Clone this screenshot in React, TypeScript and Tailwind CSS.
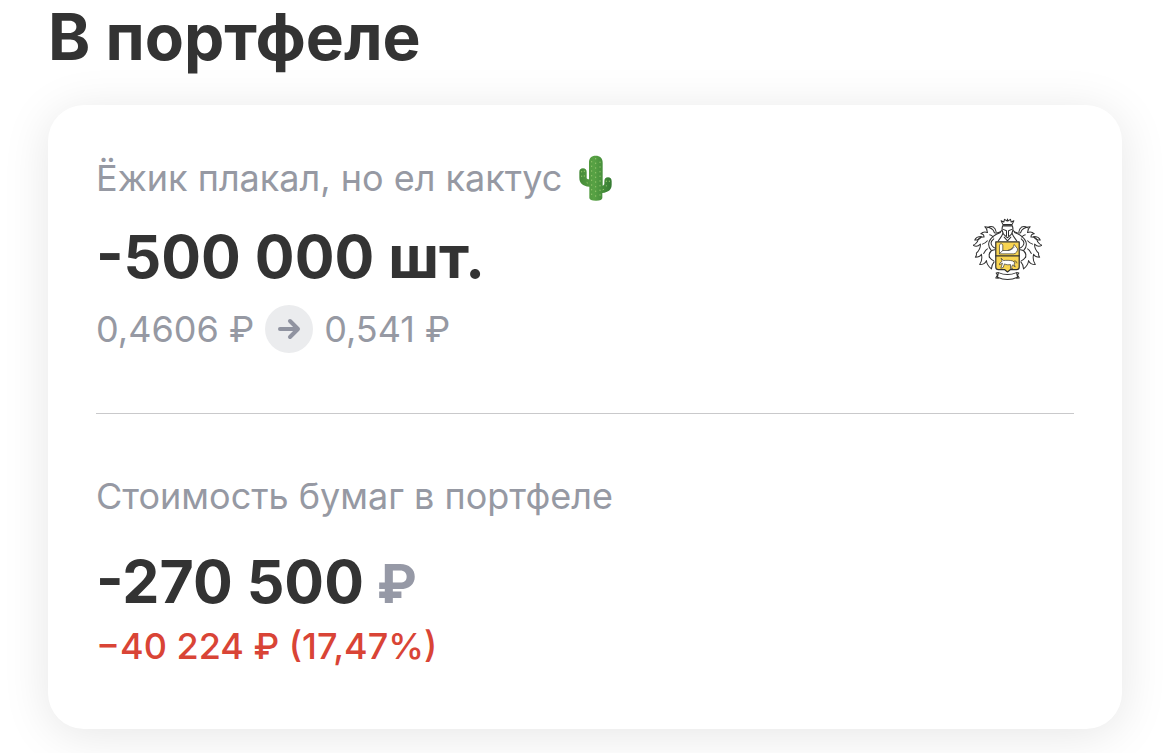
import { ReactNode } from "react";

interface Position {
  name: string;
  quantity: string;
  buyPrice: string;
  currentPrice: string;
  total: string;
  change: string;
}

const position: Position = {
  name: "Ёжик плакал, но ел кактус",
  quantity: "-500 000 шт.",
  buyPrice: "0,4606 ₽",
  currentPrice: "0,541 ₽",
  total: "-270 500",
  change: "−40 224 ₽ (17,47%)",
};

function Label({ children }: { children: ReactNode }) {
  return <div className="flex items-center gap-4 text-4xl leading-11 text-[#9699a3]">{children}</div>;
}

function Cactus() {
  return (
    <svg className="h-[46px] w-[34px] shrink-0" viewBox="57 43 102 138" role="img" aria-label="Кактус">
      <defs>
        <linearGradient id="stem" x1="0" x2="1">
          <stop offset="0" stopColor="#458a38" />
          <stop offset="0.45" stopColor="#58a244" />
          <stop offset="1" stopColor="#347a32" />
        </linearGradient>
      </defs>
      <path
        d="M61 94c0-7 4-11 11-11s11 4 11 11v17c0 3 2 4 7 5V66c0-14 7-21 20-21s21 7 21 21v69c4-1 5-3 5-7v-6c0-8 4-12 11-12s11 4 11 12v10c0 15-9 22-28 25v15c0 5-6 8-19 8s-20-3-20-8v-34c-20-2-30-11-30-27z"
        fill="url(#stem)"
      />
      <path
        d="M98 62v108M110 53v122M123 64v105M68 92v22M76 91v27M142 121v15M151 121v12M84 126l10 6M132 147l12-5"
        fill="none"
        stroke="#93c46c"
        strokeWidth="3"
        strokeLinecap="round"
        strokeDasharray="2 12"
      />
    </svg>
  );
}

// Left half of the leaf mantling, mirrored for the right side
const mantling = (
  <>
    <path d="M129 75c-7 7-15 9-23 7-3-11-13-17-29-18 6 5 8 10 8 17M85 67c6-4 12-5 18-2 5 3 7 8 8 14" />
    <path d="M85 81c-9-3-15-1-20 4 7 0 10 4 10 10-12-1-18 4-20 14-4 6-8 9-13 10 8 5 16 3 22-3 1 11-3 19-12 27 1 4 0 8-3 12 9 0 15-3 18-9 3 12 2 21-5 31 10 0 17-4 20-12 1 10 6 18 15 25 0-9 3-15 8-21" />
    <path d="M124 81c-17 6-29 15-34 28-3 9-1 17 6 25M104 100c-8 6-10 14-5 21 3 4 6 6 10 7M107 133c-10 1-16 6-17 15 0 9 5 14 14 18M96 137c-5 6-7 12-5 19" />
    <path d="M47 104c3-8 9-11 20-11-4 8-10 11-20 11z" />
    <path d="M92 88c5 1 8 3 10 7M70 116c7-2 11-5 15-10M74 144c3-6 5-11 11-14" />
  </>
);

function Emblem() {
  return (
    <svg
      className="h-[63px] w-[69px] shrink-0"
      viewBox="42 38 206 188"
      fill="none"
      stroke="#303030"
      strokeWidth="3"
      strokeLinejoin="round"
      strokeLinecap="round"
      role="img"
      aria-label="Герб"
    >
      {mantling}
      <g transform="matrix(-1 0 0 1 290 0)">{mantling}</g>

      {/* crown */}
      <path d="M131 57l-5-11 8 4 2-8 8 5 1-6 1 6 8-5 2 8 8-4-5 11zM131 61h28" />
      {/* helmet */}
      <path d="M130 62c-3 9-1 17 3 24l12 11 12-11c4-7 6-15 3-24z" fill="#fff" />
      <path d="M132 72l10 4v15M158 72l-10 4v15" />
      <path d="M131 84c-2 9-9 14-14 23M159 84c2 9 9 14 14 23M135 95l10 11 10-11" />

      {/* shield */}
      <path d="M110 109h70v76c0 4-3 7-8 7h-18l-9 7-9-7h-18c-5 0-8-3-8-7z" fill="#f8d451" strokeWidth="3.6" />
      <path d="M110 151h70" strokeWidth="3.6" />
      {/* upper arm with a book */}
      <path d="M121 144v-23c0-4 2-6 5-6s5 2 5 6v14h14c11-2 18-9 20-18l10 13c0 8-4 13-11 15h-34z" fill="#fff" strokeWidth="2" />
      <path d="M131 135l-9 8M146 135c8 0 14-4 19-10" strokeWidth="2" />
      {/* unicorn */}
      <path
        d="M123 172l6-5-3-9 7 7c9-1 19-1 27 1l8 6-4 3 4 9-8-6-3 7 3 4h-6v-12c-7 1-12 1-18-2l-4 11-7 2 5-15-8 4z"
        fill="#fff"
        strokeWidth="2"
      />
      <path d="M164 167c5-3 8 0 9 5" strokeWidth="2" />

      {/* ribbon */}
      <path d="M118 201c16 7 38 7 54 0l3 14c-18 8-42 8-60 0zM118 201l-7 1 4 6-5 9 8 1M172 201l7 1-4 6 5 9-8 1" />
    </svg>
  );
}

export default function App() {
  return (
    <main className="bg-white px-12 pb-6 font-['Inter','Liberation_Sans',sans-serif] text-[#333]">
      <h1 className="pb-[31px] text-[64px] leading-[74px] font-bold">В портфеле</h1>

      <section className="rounded-[36px] bg-white px-12 pt-[50px] pb-[61px] shadow-[0_6px_48px_rgba(0,0,0,0.1)]">
        <div className="flex items-center justify-between border-b border-[#c9c9cb] pb-[60px]">
          <div>
            <Label>
              <span>{position.name}</span>
              <Cactus />
            </Label>
            <div className="pt-5 text-[59px] leading-[72px] font-bold">{position.quantity}</div>
            <div className="flex items-center gap-[11px] pt-3 text-4xl text-[#9699a3]">
              <span>{position.buyPrice}</span>
              <span className="flex size-12 items-center justify-center rounded-full bg-[#ebecee]">
                <svg className="size-6" viewBox="0 0 24 24" fill="none" stroke="#9093a0" strokeWidth="4" strokeLinecap="round" strokeLinejoin="round">
                  <path d="M3 12h18M13 4l8 8-8 8" />
                </svg>
              </span>
              <span>{position.currentPrice}</span>
            </div>
          </div>
          <div className="pr-8 pb-2.5">
            <Emblem />
          </div>
        </div>

        <div className="pt-[60px]">
          <Label>Стоимость бумаг в портфеле</Label>
          <div className="pt-7 text-[59px] leading-[72px] font-bold">
            {position.total}
            <span className="text-[54px] leading-none text-[#9699a6]"> ₽</span>
          </div>
          <div className="pt-1.5 text-4xl leading-11 font-medium text-[#d94436]">{position.change}</div>
        </div>
      </section>
    </main>
  );
}
